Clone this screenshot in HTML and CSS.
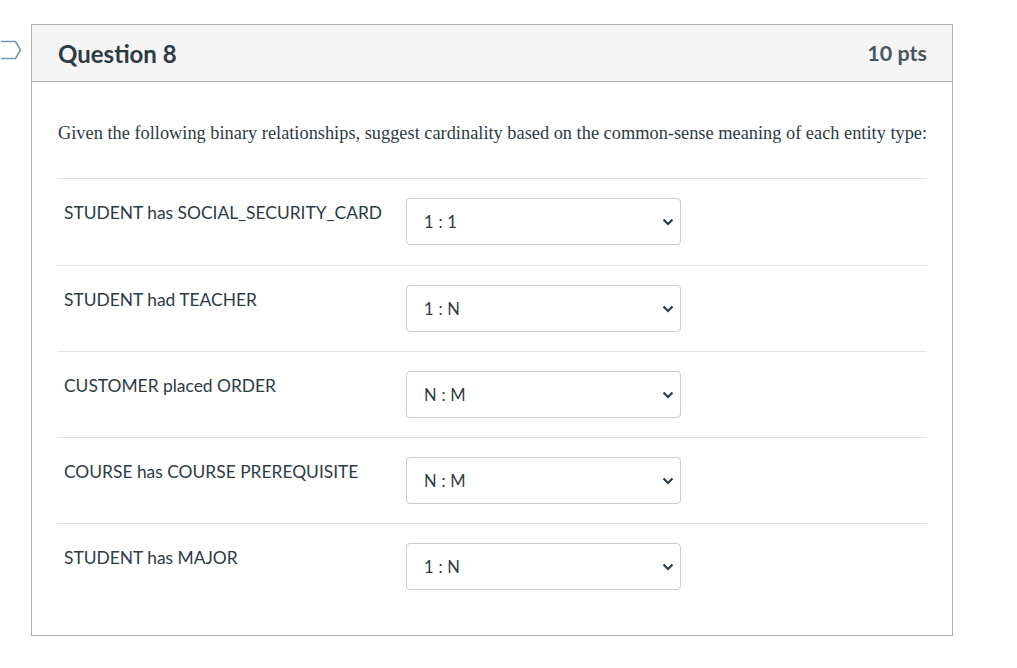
FILE: index.html
```html
<!DOCTYPE html>
<html>
<head>
<meta charset="utf-8">
<link rel="stylesheet" href="styles.css">
</head>
<body>
<div class="page">
  <svg class="marker" width="22" height="22" viewBox="0 0 22 22"><path d="M1 2.5 H15.5 L20.5 11 L15.5 19.5 H1" fill="none" stroke="#7396b8" stroke-width="1.5" stroke-linejoin="round"/></svg>
  <div class="card">
    <div class="card-header">
      <h2 class="title">Question 8</h2>
      <span class="pts">10 pts</span>
    </div>
    <div class="card-body">
      <p class="prompt">Given the following binary relationships, suggest cardinality based on the common-sense meaning of each entity type:</p>
      <div class="rows">
        <div class="row">
          <div class="label">STUDENT has SOCIAL_SECURITY_CARD</div>
          <div class="select"><span>1 : 1</span><svg class="chev" width="12" height="8" viewBox="0 0 12 8"><path d="M1.5 1.5 L6 6 L10.5 1.5" fill="none" stroke="#2d3b45" stroke-width="2.2"/></svg></div>
        </div>
        <div class="row">
          <div class="label">STUDENT had TEACHER</div>
          <div class="select"><span>1 : N</span><svg class="chev" width="12" height="8" viewBox="0 0 12 8"><path d="M1.5 1.5 L6 6 L10.5 1.5" fill="none" stroke="#2d3b45" stroke-width="2.2"/></svg></div>
        </div>
        <div class="row">
          <div class="label">CUSTOMER placed ORDER</div>
          <div class="select"><span>N : M</span><svg class="chev" width="12" height="8" viewBox="0 0 12 8"><path d="M1.5 1.5 L6 6 L10.5 1.5" fill="none" stroke="#2d3b45" stroke-width="2.2"/></svg></div>
        </div>
        <div class="row">
          <div class="label">COURSE has COURSE PREREQUISITE</div>
          <div class="select"><span>N : M</span><svg class="chev" width="12" height="8" viewBox="0 0 12 8"><path d="M1.5 1.5 L6 6 L10.5 1.5" fill="none" stroke="#2d3b45" stroke-width="2.2"/></svg></div>
        </div>
        <div class="row">
          <div class="label">STUDENT has MAJOR</div>
          <div class="select"><span>1 : N</span><svg class="chev" width="12" height="8" viewBox="0 0 12 8"><path d="M1.5 1.5 L6 6 L10.5 1.5" fill="none" stroke="#2d3b45" stroke-width="2.2"/></svg></div>
        </div>
      </div>
    </div>
  </div>
</div>
</body>
</html>
```

FILE: styles.css
```css
* { box-sizing: border-box; }
html, body { margin: 0; padding: 0; background: #fff; }
body { font-family: Lato, "Liberation Sans", sans-serif; color: #2d3b45; }
.page { position: relative; padding: 24px 0 0 31px; width: 1017px; height: 668px; }
.marker { position: absolute; left: 0; top: 39px; }
.card { width: 922px; border: 1px solid #aeaeae; }
.card-header { background: #f5f5f5; height: 57px; border-bottom: 1px solid #aeaeae; display: flex; align-items: center; justify-content: space-between; padding: 0 25px 0 26px; }
.title { margin: 0; font-size: 24px; font-weight: 700; color: #2d3b45; }
.pts { font-size: 21.5px; font-weight: 700; color: #4a5660; }
.card-body { padding: 40px 25px 26px 25px; }
.prompt { margin: 0 0 34px 1px; font-family: "Liberation Serif", serif; font-size: 18.35px; line-height: 22px; color: #2d3b45; white-space: nowrap; }
.rows { display: flex; flex-direction: column; }
.row { border-top: 1px solid #e0e3e5; padding: 19px 0 19px 7px; display: flex; align-items: flex-start; }
.row:first-child { padding-bottom: 20px; }
.label { width: 342px; font-size: 17.4px; line-height: 21px; padding-top: 4px; color: #2d3b45; }
.select { width: 275px; height: 47px; border: 1px solid #c7cdd1; border-radius: 4px; display: flex; align-items: center; justify-content: space-between; padding: 0 6px 0 17px; font-size: 16.5px; letter-spacing: 0.3px; }
.chev { display: block; }
```
